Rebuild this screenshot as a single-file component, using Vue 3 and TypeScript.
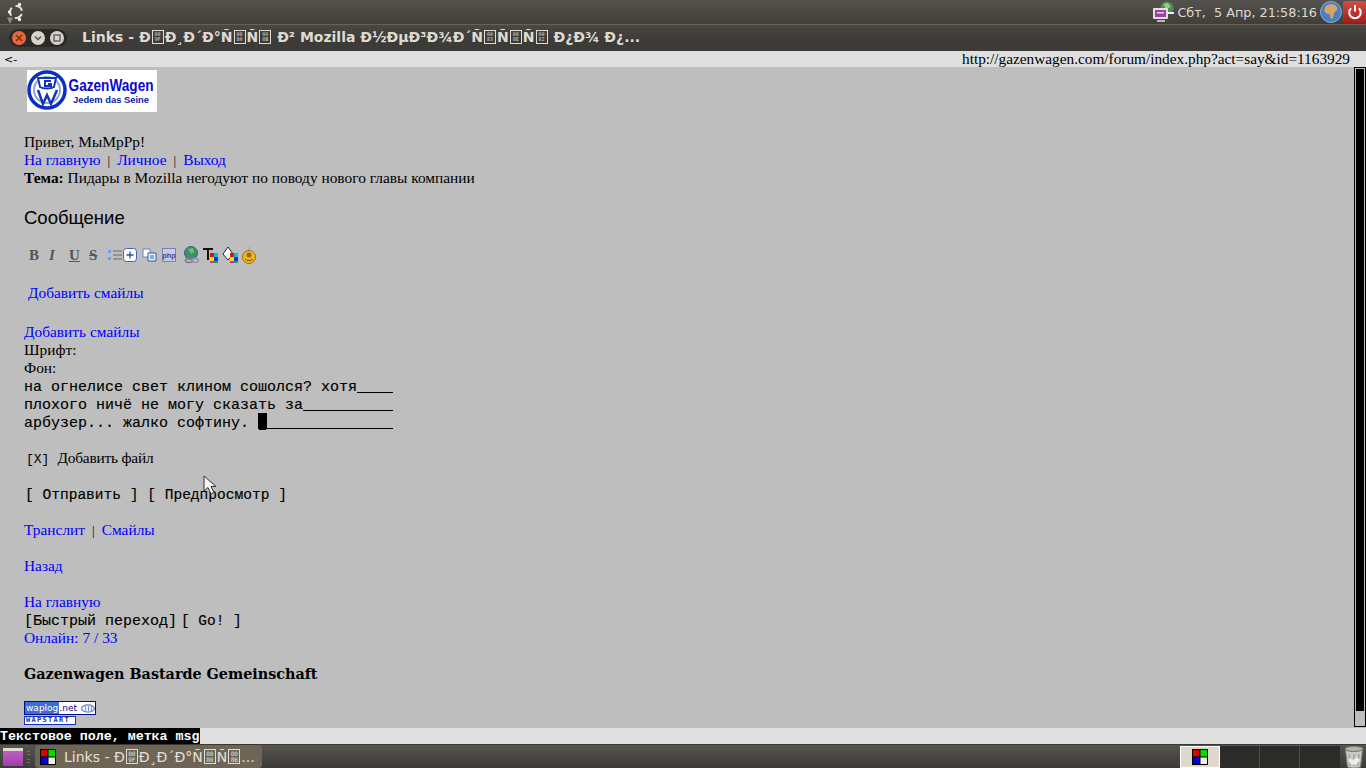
<script setup lang="ts">
type Seg = { t?: string; hex?: [string, string] }
const hx = (a: string, b: string): Seg => ({ hex: [a, b] })
const title: Seg[] = [
  { t: 'Links - Ð' }, hx('00', '9F'), { t: 'Ð¸Ð´Ð°Ñ' }, hx('00', '80'), { t: 'Ñ' }, hx('00', '8B'),
  { t: ' Ð² Mozilla Ð½ÐµÐ³Ð¾Ð´Ñ' }, hx('00', '83'), { t: 'Ñ' }, hx('00', '8E'), { t: 'Ñ' }, hx('00', '82'),
  { t: ' Ð¿Ð¾ Ð¿...' }
]
const task: Seg[] = [
  { t: 'Links - Ð' }, hx('00', '9F'), { t: 'Ð¸Ð´Ð°Ñ' }, hx('00', '80'), { t: 'Ñ' }, hx('00', '8B'), { t: '...' }
]
const lines = [
  { text: 'на огнелисе свет клином сошолся? хотя', fill: 4 },
  { text: 'плохого ничё не могу сказать за', fill: 10 },
  { text: 'арбузер... жалко софтину. ', fill: 14, cursor: true }
]
</script>

<template>
  <div class="screen">
    <header class="top">
      <svg class="ubuntu" width="26" height="24" viewBox="0 0 26 24">
        <circle cx="16" cy="12" r="6" fill="none" stroke="#e6e2da" stroke-width="2" stroke-dasharray="8.500 4" stroke-dashoffset="-2" />
        <circle cx="9.500" cy="12" r="1.700" fill="#efece6" />
        <circle cx="19.500" cy="4.500" r="1.700" fill="#efece6" />
        <circle cx="19.500" cy="19.500" r="1.700" fill="#efece6" />
        <path d="M7 17.500h6l-3 6.500z" fill="#8f8c84" />
      </svg>
      <div class="spacer"></div>
      <svg width="24" height="24" viewBox="0 0 24 24">
        <circle cx="15" cy="8" r="6.500" fill="#4f8a5a" />
        <path d="M11 4l5-1 3 4-5 2z" fill="#9cc77c" />
        <rect x="1" y="8" width="15" height="11" rx="1" fill="#e3e1dc" />
        <rect x="3" y="10" width="11" height="7" fill="#a13ea6" />
        <rect x="5" y="12" width="7" height="1.500" fill="#eccbef" />
        <rect x="5" y="20" width="8" height="2" fill="#bbb" />
        <rect x="16" y="12" width="6" height="2" fill="#eee" />
      </svg>
      <span class="clock">Сбт,&nbsp; 5 Апр, 21:58:16</span>
      <svg class="globe" width="24" height="24" viewBox="0 0 24 24">
        <circle cx="12" cy="12" r="10.500" fill="#4a80c0" stroke="#86acd6" />
        <path d="M7 6c3-2.500 8-2 10 0 1 1 2 3 1 4l-3 3-1 5c-1 1.500-2 1-2.500-.5l-.5-3.500c-2 .5-5-1-5.500-3-.3-2 .5-4 1.500-5z" fill="#d9a468" />
      </svg>
      <div class="power">
        <svg width="22" height="22" viewBox="0 0 24 24">
          <path d="M7.800 7.800a6.300 6.300 0 1 0 8.400 0" fill="none" stroke="#fff" stroke-width="2.200" />
          <path d="M12 4.500v7" stroke="#fff" stroke-width="2.200" />
        </svg>
      </div>
    </header>

    <div class="titlebar">
      <div class="winbtns">
        <span class="wb close"><svg width="8" height="8" viewBox="0 0 8 8"><path d="M1 1l6 6M7 1l-6 6" stroke="#7a2f14" stroke-width="1.500" /></svg></span>
        <span class="wb"><svg width="8" height="8" viewBox="0 0 8 8"><path d="M1 2.500l3 3 3-3" fill="none" stroke="#555" stroke-width="1.500" /></svg></span>
        <span class="wb"><svg width="8" height="8" viewBox="0 0 8 8"><rect x="1" y="1" width="6" height="6" fill="none" stroke="#666" stroke-width="1.500" /></svg></span>
      </div>
      <div class="wintitle">
        <template v-for="(s, i) in title" :key="i">
          <span v-if="s.t">{{ s.t }}</span>
          <span v-else class="hex"><i>{{ s.hex![0] }}</i><i>{{ s.hex![1] }}</i></span>
        </template>
      </div>
    </div>

    <div class="urlbar">
      <span class="back">&lt;-</span>
      <span class="url">http://gazenwagen.com/forum/index.php?act=say&amp;id=1163929</span>
    </div>

    <main class="page">
      <div class="content">
        <div class="logo">
          <svg width="42" height="42" viewBox="0 0 42 42">
            <circle cx="20" cy="20" r="18" fill="#fff" stroke="#0a2fc0" stroke-width="3.500" />
            <circle cx="20" cy="20" r="13" fill="none" stroke="#8ea4e0" stroke-width="2" />
            <path d="M11 8h18l-2 9c-3 2-11 2-14 0z" fill="#fff" stroke="#1434b8" stroke-width="2" />
            <path d="M24 11h-6v5h6v-2h-3" fill="none" stroke="#1434b8" stroke-width="2" />
            <path d="M11 20l5 14 4-9 4 9 6-14" fill="none" stroke="#1434b8" stroke-width="2.500" />
          </svg>
          <div class="logotext">
            <span class="lt1">GazenWagen</span>
            <span class="lt2">Jedem das Seine</span>
          </div>
        </div>

        <p class="hello">Привет, МыМрРр!</p>
        <p class="row"><a>На главную</a><span class="pipe">|</span><a>Личное</a><span class="pipe">|</span><a>Выход</a></p>
        <p class="row"><b>Тема:</b> Пидары в Mozilla негодуют по поводу нового главы компании</p>

        <h2 class="heading">Сообщение</h2>

        <div class="tools">
          <b class="tb">B</b>
          <i class="tb it">I</i>
          <u class="tb">U</u>
          <s class="tb st">S</s>
          <svg width="16" height="16" viewBox="0 0 16 16"><rect x="1" y="3" width="3" height="3" fill="#6f9ff0" /><rect x="1" y="10" width="3" height="3" fill="#6f9ff0" /><path d="M6 4h9M6 8h9M6 12h9" stroke="#666" stroke-width="1.200" /></svg>
          <svg width="14" height="14" viewBox="0 0 14 14"><rect x=".5" y=".5" width="13" height="13" rx="3" fill="#fff" stroke="#3a62c0" /><path d="M3.500 7h7M7 3.500v7" stroke="#2b4fa8" stroke-width="1.300" /></svg>
          <svg class="g1" width="16" height="16" viewBox="0 0 16 16"><path d="M1 2h7v8H1z" fill="#fff" stroke="#5c86c8" /><path d="M6 6h8v8H6z" fill="#eaf0fa" stroke="#2f5fa8" /><path d="M8 9h4M8 11h4" stroke="#2f5fa8" /></svg>
          <svg class="g2" width="14" height="14" viewBox="0 0 14 14"><rect x=".5" y=".5" width="13" height="13" fill="#c9c9e0" stroke="#7f7fb8" /><text x="7" y="10" text-anchor="middle" font-size="7.500" fill="#4a4a90" font-family="Liberation Sans, sans-serif">php</text></svg>
          <svg class="g3" width="18" height="18" viewBox="0 0 18 18"><circle cx="8" cy="7" r="6.500" fill="#3f8f6a" stroke="#2f5f9f" /><path d="M5 3l5-1 1 4-3 2z" fill="#6fbf5f" /><ellipse cx="6" cy="14.500" rx="3.500" ry="2" fill="none" stroke="#6f8098" stroke-width="1.500" /><ellipse cx="12" cy="14.500" rx="3.500" ry="2" fill="none" stroke="#8a98ac" stroke-width="1.500" /></svg>
          <svg class="g4" width="18" height="18" viewBox="0 0 18 18"><path d="M1 2h10v2H7v10H5V4H1z" fill="#111" /><rect x="8" y="7" width="4" height="4" fill="#e01010" /><rect x="12" y="7" width="4" height="4" fill="#10c0d0" /><rect x="8" y="11" width="4" height="4" fill="#e8e010" /><rect x="12" y="11" width="4" height="4" fill="#2030d0" /><rect x="8" y="15" width="4" height="2" fill="#e020d0" /><rect x="12" y="15" width="4" height="2" fill="#10b040" /></svg>
          <svg class="g5" width="18" height="18" viewBox="0 0 18 18"><path d="M6 1l5 7-5 6-5-6z" fill="#fff" stroke="#222" /><rect x="8" y="7" width="4" height="4" fill="#e01010" /><rect x="12" y="7" width="4" height="4" fill="#10c0d0" /><rect x="8" y="11" width="4" height="4" fill="#e8e010" /><rect x="12" y="11" width="4" height="4" fill="#2030d0" /><rect x="8" y="15" width="4" height="2" fill="#e020d0" /><rect x="12" y="15" width="4" height="2" fill="#10b040" /></svg>
          <svg class="g6" width="16" height="18" viewBox="0 0 16 18"><circle cx="8" cy="11" r="6.500" fill="#f2b90f" stroke="#a06a10" /><circle cx="8" cy="9" r="2.500" fill="#8a6a3a" /><path d="M4 13c2 2 6 2 8 0" fill="none" stroke="#7a4a10" /><path d="M8 4V1" stroke="#999" /></svg>
        </div>

        <p class="smile1"><a>Добавить смайлы</a></p>
        <p class="smile2"><a>Добавить смайлы</a></p>
        <p class="row">Шрифт:</p>
        <p class="row">Фон:</p>

        <div class="textarea">
          <div v-for="(l, i) in lines" :key="i" class="tline">
            <span class="ttext">{{ l.text }}</span><span v-if="l.cursor" class="cursor"></span><span class="fill" :style="{ width: l.fill * 9 + 'px' }"></span>
          </div>
        </div>

        <p class="check"><span class="mono thin">[X]</span><span class="cklabel">Добавить файл</span></p>
        <p class="buttons"><span class="mono small">[ Отправить ] [ Предпросмотр ]</span></p>
        <p class="gap"><a>Транслит</a><span class="pipe">|</span><a>Смайлы</a></p>
        <p class="gap"><a>Назад</a></p>
        <p class="gap"><a>На главную</a></p>
        <p class="row quick"><span class="mono">[Быстрый переход]</span> <span class="mono go">[ Go! ]</span></p>
        <p class="row"><a>Онлайн: 7 / 33</a></p>
        <p class="foot">Gazenwagen Bastarde Gemeinschaft</p>

        <div class="waplog">
          <span class="wl-a">waplog</span><span class="wl-b">.net</span>
          <svg width="15" height="9" viewBox="0 0 15 9"><ellipse cx="7.500" cy="4.500" rx="6.800" ry="3.800" fill="none" stroke="#5a7fd0" stroke-width="1.300" /><path d="M5 2v5M8 2v5M11 2v5" stroke="#5a7fd0" /></svg>
        </div>
        <div class="wapstart">WAPSTART</div>
      </div>

      <div class="scrollbar"><div class="thumb"></div></div>

      <svg class="pointer" width="16" height="22" viewBox="0 0 16 22">
        <path d="M1 1v15l4-3.500 3 6.500 3-1.500-3-6h5z" fill="#f4f4f4" stroke="#333" />
      </svg>
    </main>

    <div class="status"><span class="stext">Текстовое поле, метка msg</span></div>

    <footer class="bottom">
      <div class="showdesk"><span></span></div>
      <span class="grip"></span>
      <div class="taskbtn">
        <svg width="16" height="16" viewBox="0 0 16 16"><rect width="16" height="16" fill="#000" /><rect x="1" y="1" width="6.500" height="6.500" fill="#e00000" /><rect x="8.500" y="1" width="6.500" height="6.500" fill="#00e000" /><rect x="1" y="8.500" width="6.500" height="6.500" fill="#0000d8" /><rect x="8.500" y="8.500" width="6.500" height="6.500" fill="#eee" /></svg>
        <span class="tasktext">
          <template v-for="(s, i) in task" :key="i">
            <span v-if="s.t">{{ s.t }}</span>
            <span v-else class="hex lg"><i>{{ s.hex![0] }}</i><i>{{ s.hex![1] }}</i></span>
          </template>
        </span>
      </div>
      <div class="spacer"></div>
      <div class="pager">
        <div class="ws active">
          <svg width="16" height="16" viewBox="0 0 16 16"><rect width="16" height="16" fill="#000" /><rect x="1" y="1" width="6.500" height="6.500" fill="#e00000" /><rect x="8.500" y="1" width="6.500" height="6.500" fill="#00e000" /><rect x="1" y="8.500" width="6.500" height="6.500" fill="#0000d8" /><rect x="8.500" y="8.500" width="6.500" height="6.500" fill="#eee" /></svg>
        </div>
        <div class="ws"></div>
        <div class="ws"></div>
        <div class="ws"></div>
      </div>
      <svg class="trash" width="24" height="24" viewBox="0 0 22 24">
        <ellipse cx="11" cy="4" rx="9" ry="2.500" fill="#b5b5b0" stroke="#777" />
        <path d="M2.500 5l2 17c3 1.500 10 1.500 13 0l2-17c-4 2-13 2-17 0z" fill="#c8c8c4" stroke="#7d7d78" />
        <path d="M6 9l1 12M11 9v12M16 9l-1 12" stroke="#8f8f8a" />
        <path d="M6 13l4 2 4-3 3 3-3 4-5 1-3-3z" fill="#ecece8" />
      </svg>
    </footer>
  </div>
</template>

<style>
html, body { margin: 0; padding: 0; background: #bebebe; overflow: hidden; }
</style>

<style scoped>
.screen { width: 1366px; height: 768px; display: flex; flex-direction: column; overflow: hidden; font-family: "Liberation Serif", serif; color: #000; }
.spacer { flex: 1; }
.top { height: 24px; flex: none; display: flex; align-items: center; box-sizing: border-box; background: linear-gradient(#55534d, #3f3e3a); }
.ubuntu { flex: none; }
.clock { font: 12.800px "DejaVu Sans", sans-serif; color: #dfdbd2; margin: 0 2px 0 1px; white-space: nowrap; }
.globe { flex: none; }
.power { width: 23px; height: 22px; background: linear-gradient(#d84c44, #a31c1c); border-radius: 2px; display: flex; align-items: center; justify-content: center; }
.titlebar { height: 27px; flex: none; display: flex; align-items: center; box-sizing: border-box; padding-left: 9px; background: linear-gradient(#4a4843, #3c3b37 60%); border-top: 1px solid #6a6152; }
.winbtns { display: flex; gap: 5px; align-items: center; background: #2a2927; border-radius: 9px; padding: 2px 3px; height: 14px; }
.wb { width: 14px; height: 14px; border-radius: 50%; background: #d8d4cc; display: flex; align-items: center; justify-content: center; }
.wb.close { background: #e8683c; }
.wintitle { margin: -2px 0 0 15px; font: bold 14px "DejaVu Sans", sans-serif; color: #dfdbd2; white-space: nowrap; display: flex; align-items: center; }
.wintitle span { white-space: pre; }
.hex { display: inline-flex !important; flex-direction: column; width: 10px; height: 12px; border: 1px solid #dfdbd2; margin: 0 1px; font: 5px/5.500px "DejaVu Sans Mono", monospace; align-items: center; justify-content: center; }
.hex i { font-style: normal; display: block; }
.hex.lg { width: 10px; height: 13px; font-size: 6px; line-height: 6px; font-weight: normal; }
.urlbar { height: 16px; flex: none; display: flex; justify-content: space-between; background: #dfdfdf; padding: 0 16px 0 4px; font-size: 15.300px; line-height: 15px; }
.back { font-family: "DejaVu Sans", sans-serif; font-size: 11px; line-height: 17px; }
.page { flex: 1; position: relative; background: #bebebe; display: flex; min-height: 0; }
.content { flex: 1; padding: 3px 0 0 24px; min-width: 0; font-size: 15.400px; line-height: 18px; }
p { margin: 0; height: 18px; white-space: pre; }
a { color: #0000ff; }
.pipe { margin: 0 7px; font-size: 13px; }
.logo { width: 130px; height: 42px; margin-left: 3px; background: #fff; display: flex; align-items: center; }
.logotext { display: flex; flex-direction: column; align-items: center; margin-left: -2px; width: 88px; }
.lt1 { font: bold 17px/18px "Liberation Sans", sans-serif; color: #0808d0; transform: scaleX(.8); white-space: nowrap; }
.lt2 { font: bold 9.400px/10px "Liberation Sans", sans-serif; color: #0a1aa8; white-space: nowrap; }
.hello { margin-top: 21px; }
.heading { margin: 19px 0 0; font: normal 18.500px/24px "Liberation Sans", sans-serif; height: 24px; }
.tools { height: 20px; margin-top: 15px; display: flex; align-items: center; padding-left: 3px; color: #555; font: bold 15px "Liberation Serif", serif; }
.tb { width: 20px; flex: none; text-align: left; padding-left: 2px; box-sizing: border-box; }
.it { font-style: italic; }
.st { font-weight: bold; }
.tools svg { flex: none; }
.g1 { margin-left: 5px; }
.g2 { margin-left: 4px; }
.g3 { margin-left: 7px; }
.g4 { margin-left: 1px; }
.g5 { margin-left: 2px; }
.g6 { margin-left: 1px; }
.smile1 { margin-top: 19px; padding-left: 4px; }
.smile2 { margin-top: 21px; }
.mono { font-family: "Liberation Mono", monospace; font-size: 15px; -webkit-text-stroke: .15px #000; }
.small { font-size: 14.550px; }
.thin { font-size: 13px; -webkit-text-stroke: 0; }
.go { font-size: 14.500px; }
.textarea { font: 15px/18px "Liberation Mono", monospace; -webkit-text-stroke: .15px #000; }
.tline { height: 18px; display: flex; white-space: pre; }
.ttext { position: relative; top: 2px; }
.fill { height: 15px; border-bottom: 1px solid #000; }
.cursor { width: 9px; height: 15px; background: #000; border-bottom: 1px solid #000; box-shadow: 0 2px 0 -1px #000; }
.check { margin-top: 18px; padding-left: 2px; }
.cklabel { margin-left: 8px; letter-spacing: -.2px; }
.buttons { margin-top: 18px; padding-left: 1px; }
.gap { margin-top: 18px; }
.foot { margin-top: 18px; font: bold 14.350px/18px "DejaVu Serif", serif; }
.waplog { margin-top: 18px; width: 72px; height: 14px; box-sizing: border-box; border: 1px solid #0a0a80; background: #fff; display: flex; align-items: center; font: 9px/12px "DejaVu Sans", sans-serif; color: #0a0a80; overflow: hidden; }
.wl-a { background: #3a6fd8; color: #fff; padding: 0 1px; line-height: 12px; }
.wl-b { margin-right: 4px; }
.wapstart { margin-top: 1px; width: 52px; height: 9px; box-sizing: border-box; border: 1px solid #1030c0; background: #fff; color: #1030c0; font: bold 7px/7px "DejaVu Sans Mono", monospace; letter-spacing: 1.300px; padding-left: 1px; overflow: hidden; white-space: nowrap; }
.scrollbar { width: 12px; flex: none; height: 660px; box-sizing: border-box; border: 1px solid #000; background: #bebebe; }
.thumb { height: 642px; background: #000; margin: 1px; }
.pointer { position: absolute; left: 203px; top: 408px; }
.status { height: 16px; flex: none; background: #dfdfdf; }
.stext { display: inline-block; height: 16px; width: 200px; background: #000; color: #fff; font: bold 13.300px/17px "Liberation Mono", monospace; white-space: nowrap; overflow: hidden; }
.bottom { height: 24px; flex: none; display: flex; align-items: center; background: linear-gradient(#55534d, #3c3b37); border-top: 1px solid #3a3936; box-sizing: border-box; }
.showdesk { width: 22px; height: 22px; margin-left: 2px; display: flex; align-items: center; justify-content: center; }
.showdesk span { width: 20px; height: 18px; background: linear-gradient(#c060c0, #a03ea8); border-top: 3px solid #e0dcd4; box-sizing: border-box; }
.grip { width: 3px; height: 12px; margin: 0 5px 0 3px; border-top: 4px double #77736a; border-bottom: 4px double #77736a; box-sizing: border-box; }
.taskbtn { width: 227px; height: 23px; box-sizing: border-box; background: #6f6556; border-radius: 3px; display: flex; align-items: center; padding-left: 5px; color: #e4e0d8; }
.tasktext { margin-left: 8px; font: 14px "DejaVu Sans", sans-serif; white-space: pre; display: flex; align-items: center; }
.pager { display: flex; height: 22px; width: 160px; background: #2b2b29; margin-right: 2px; }
.ws { width: 40px; height: 22px; box-sizing: border-box; border-right: 1px solid #4a4a46; display: flex; align-items: center; justify-content: center; }
.ws:last-child { border-right: none; }
.ws.active { border: 1px solid #fff; background: #dfd8cc; }
.trash { flex: none; }
</style>
